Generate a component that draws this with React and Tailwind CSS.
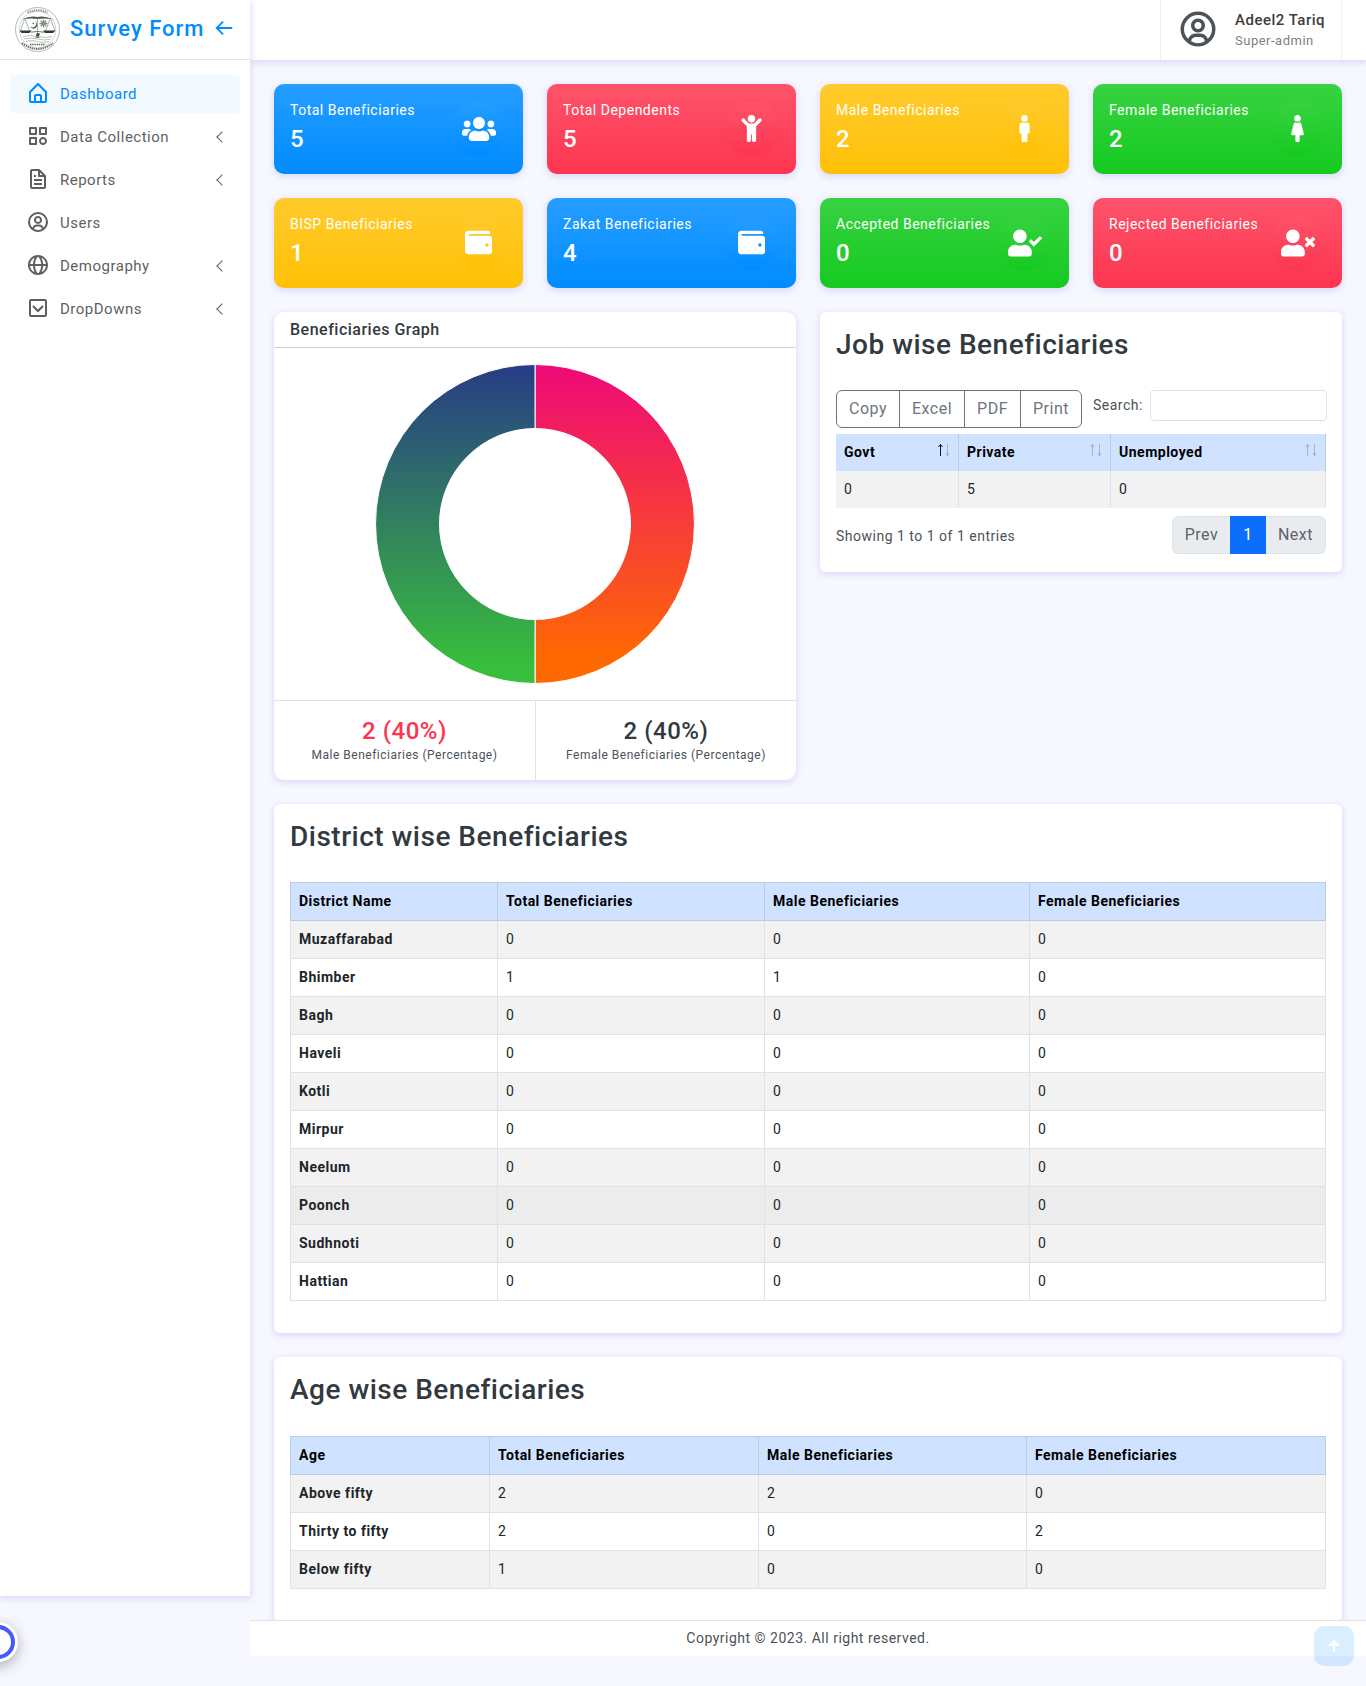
import React from "react";
import {
  BiCategory,
  BiFile,
  BiUserCircle,
  BiGlobe,
  BiChevronDownSquare,
  BiArrowBack,
  BiSolidUpArrowAlt,
} from "react-icons/bi";
import {
  FaUsers,
  FaChild,
  FaMale,
  FaFemale,
  FaWallet,
  FaUserCheck,
  FaUserTimes,
} from "react-icons/fa";

const SHADOW =
  "shadow-[0_2px_6px_0_rgb(218_218_253/0.65),0_2px_6px_0_rgb(206_206_238/0.54)]";

function HomeIcon({ size, className }) {
  return (
    <svg width={size} height={size} viewBox="0 0 24 24" fill="currentColor" className={className}>
      <path d="M5 22h14c1.103 0 2-.897 2-2v-9a1 1 0 0 0-.293-.707l-8-8a1 1 0 0 0-1.414 0l-8 8A1 1 0 0 0 3 11v9c0 1.103.897 2 2 2zm5-2v-5h4v5h-4zm-5-8.586 7-7 7 7V20h-3v-5c0-1.103-.897-2-2-2h-4c-1.103 0-2 .897-2 2v5H5v-8.586z" />
    </svg>
  );
}

function Emblem() {
  return (
    <svg width="45" height="45" viewBox="0 0 45 45" fill="none">
      <circle cx="22.5" cy="22.5" r="22" fill="#fff" stroke="#a4a8a3" strokeWidth="0.8" />
      <circle cx="22.5" cy="22.5" r="18.2" stroke="#a4a8a3" strokeWidth="0.5" />
      <path d="M12.500 5.500q10-4.500 20 0" stroke="#8b918a" strokeWidth="2.2" strokeDasharray="1.3 0.9" />
      <path d="M7 12.200q8-3.600 15.500-2.200 7.500-1.400 15.500 2.200-8-1.400-15.500-.2-7.500-1.200-15.500.2z" fill="#4d5a4b" />
      <path d="M9.500 12 5.500 24M10 12l4.500 12M35 12l-4.500 12M35.500 12 40 24M22.500 10v18" stroke="#8b918a" strokeWidth="0.7" />
      <path d="M4.500 23.500h12l-2 2.600h-8zM28 23.500h12.500l-2.500 2.600h-8z" fill="#26402a" />
      <path d="M16 25.200q6-1.500 13 0" stroke="#4d5a4b" strokeWidth="0.8" />
      <path d="M20.200 14.200a3.900 3.900 0 1 1-5.300 5 3.500 3.500 0 0 0 5.300-5z" fill="#4a594e" />
      <circle cx="18.200" cy="16.500" r="0.8" fill="#4a594e" />
      <path d="M28.500 12.500v8M24.500 16.500h8M25.700 13.700l5.600 5.600M31.300 13.700l-5.600 5.600" stroke="#848c84" strokeWidth="1.300" />
      <path d="M22 26q4 0 2.500 2t.5 3l-5-.5q2-1 1-2.500z" fill="#3c4f3e" />
      <path d="M8 29.500q7-2 14.500 0t14.500 0M9 32q7-2 13.500 0T36 32M11 34.500q6-2 11.500 0t11.500 0" stroke="#adb2ac" strokeWidth="0.8" />
      <path d="M15 37.500h15" stroke="#596158" strokeWidth="1.600" strokeDasharray="1.400 0.8" />
      <path d="M7 36q15.500 12 31 0" stroke="#626a61" strokeWidth="1.900" strokeDasharray="1.400 0.8" />
    </svg>
  );
}

const menu = [
  { label: "Dashboard", Icon: HomeIcon, active: true },
  { label: "Data Collection", Icon: BiCategory, arrow: true },
  { label: "Reports", Icon: BiFile, arrow: true },
  { label: "Users", Icon: BiUserCircle },
  { label: "Demography", Icon: BiGlobe, arrow: true },
  { label: "DropDowns", Icon: BiChevronDownSquare, arrow: true },
];

function Sidebar() {
  return (
    <aside className={"relative z-20 h-[1596px] w-[250px] shrink-0 bg-white " + SHADOW}>
      <div className="flex h-[60px] items-center border-b border-[#e4e4e4] pl-[15px]">
        <Emblem />
        <span className="-mt-[2px] ml-[10px] w-[143px] whitespace-nowrap text-[22px] font-medium leading-[26px] tracking-[1px] text-[#008cff]">
          Survey Form
        </span>
        <BiArrowBack size={22} color="#008cff" className="-mt-1" />
      </div>
      <nav className="flex flex-col gap-[5px] px-[10px] pt-[15px]">
        {menu.map(({ label, Icon, active, arrow }) => (
          <a
            key={label}
            className={
              "flex h-[38px] items-center rounded-[4px] px-4 text-[15px] " +
              (active ? "bg-[#008cff]/5 text-[#008cff]" : "text-[#5f5f5f]")
            }
          >
            <Icon size={24} className="-mt-[3px]" />
            <span className="ml-[10px] flex-1">{label}</span>
            {arrow && (
              <span className="-mr-[2px] block size-2 rotate-45 border-b border-l border-[#5f5f5f]" />
            )}
          </a>
        ))}
      </nav>
    </aside>
  );
}

function Topbar() {
  return (
    <header className={"relative z-10 flex h-[60px] justify-end bg-white pr-6 " + SHADOW}>
      <div className="flex w-[182px] items-center border-x border-[#f0f0f0] pl-4">
        <BiUserCircle size={42} color="#4c5258" className="-mt-[3px]" />
        <div className="ml-4 -mt-[1px]">
          <p className="text-[15px] font-medium leading-[22px] text-[#413c3c]">Adeel2 Tariq</p>
          <p className="text-[13px] leading-[19px] text-[#808080]">Super-admin</p>
        </div>
      </div>
    </header>
  );
}

const tones = {
  blue: "bg-[#008cff]",
  red: "bg-[#fd3550]",
  yellow: "bg-[#ffc107]",
  green: "bg-[#15ca20]",
};

const stats = [
  ["Total Beneficiaries", 5, "blue", FaUsers, 34],
  ["Total Dependents", 5, "red", FaChild, 27],
  ["Male Beneficiaries", 2, "yellow", FaMale, 27],
  ["Female Beneficiaries", 2, "green", FaFemale, 27],
  ["BISP Beneficiaries", 1, "yellow", FaWallet, 27],
  ["Zakat Beneficiaries", 4, "blue", FaWallet, 27],
  ["Accepted Beneficiaries", 0, "green", FaUserCheck, 34],
  ["Rejected Beneficiaries", 0, "red", FaUserTimes, 34],
];

function StatCard({ label, value, tone, Icon, size }) {
  const fill = tones[tone] + " bg-linear-to-b/srgb from-white/15 to-white/0 ";
  return (
    <div
      className={
        fill + "flex h-[90px] items-center justify-between rounded-[10px] px-4 text-white " + SHADOW
      }
    >
      <div>
        <p className="whitespace-nowrap text-[14px] leading-[21px]">{label}</p>
        <p className="my-1 text-[24px] font-medium leading-[29px]">{value}</p>
      </div>
      <div
        className={
          fill + "-ml-6 flex size-14 shrink-0 items-center justify-center rounded-full pr-px pb-px"
        }
      >
        <Icon size={size} className="shrink-0" />
      </div>
    </div>
  );
}

function Donut() {
  return (
    <svg width="320" height="320" viewBox="0 0 320 320" className="mx-auto block">
      <defs>
        <linearGradient id="warm" gradientUnits="userSpaceOnUse" x1="0" y1="0" x2="0" y2="300">
          <stop offset="0" stopColor="#ee0979" />
          <stop offset="1" stopColor="#ff6a00" />
        </linearGradient>
        <linearGradient id="cool" gradientUnits="userSpaceOnUse" x1="0" y1="0" x2="0" y2="300">
          <stop offset="0" stopColor="#283c86" />
          <stop offset="1" stopColor="#39bd3c" />
        </linearGradient>
      </defs>
      <path
        d="M160 .5a159.500 159.500 0 0 1 0 319v-64a95.500 95.500 0 0 0 0-191z"
        fill="url(#warm)"
        stroke="#fff"
      />
      <path
        d="M160 .5a159.500 159.500 0 0 0 0 319v-64a95.500 95.500 0 0 1 0-191z"
        fill="url(#cool)"
        stroke="#fff"
      />
    </svg>
  );
}

function GraphCard() {
  return (
    <section className={"h-[468px] rounded-[10px] bg-white " + SHADOW}>
      <h6 className="h-9 border-b border-[#d0d0d0] px-4 pt-2 text-[16px] font-medium leading-[19px] text-[#32393f]">
        Beneficiaries Graph
      </h6>
      <div className="py-4">
        <Donut />
      </div>
      <div className="grid h-20 grid-cols-2 border-t border-[#dee2e6] text-center">
        <div className="pt-4">
          <p className="text-[24px] font-medium leading-[29px] text-[#fd3550]">2 (40%)</p>
          <p className="text-[12px] leading-[18px]">Male Beneficiaries (Percentage)</p>
        </div>
        <div className="border-l border-[#dee2e6] pt-4">
          <p className="text-[24px] font-medium leading-[29px] text-[#32393f]">2 (40%)</p>
          <p className="text-[12px] leading-[18px]">Female Beneficiaries (Percentage)</p>
        </div>
      </div>
    </section>
  );
}

function SortMark({ asc }) {
  return (
    <svg width="14" height="14" viewBox="0 0 14 14" fill="none" stroke="#000" className="mt-px -mr-px">
      <path d="M3.500 13V1.500M1.500 4 3.500 1.500 5.500 4" opacity={asc ? 0.9 : 0.2} />
      <path d="M10.500 1v11.500M8.500 10l2 2.500 2-2.500" opacity="0.2" />
    </svg>
  );
}

function JobCard() {
  return (
    <section className={"h-[260px] rounded-[6px] bg-white p-4 " + SHADOW}>
      <h3 className="h-[62px] text-[28px] font-medium leading-[34px] text-[#32393f]">
        Job wise Beneficiaries
      </h3>
      <div className="-mr-px flex items-start">
        <div className="flex h-[38px] w-[246px] divide-x divide-[#6c757d] rounded-[6px] border border-[#6c757d] text-[16px] leading-[36px] text-[#6c757d]">
          <span className="w-[63px] text-center">Copy</span>
          <span className="w-[65px] text-center">Excel</span>
          <span className="w-[56px] text-center">PDF</span>
          <span className="flex-1 text-center">Print</span>
        </div>
        <label className="ml-[11px] pt-[5px] leading-[21px]">Search:</label>
        <input className="ml-auto h-[31px] w-[177px] rounded-[4px] border border-[#dee2e6] bg-white" />
      </div>
      <table className="mt-[6px] w-[490px] table-fixed border-separate border-spacing-0 text-left leading-[21px]">
        <colgroup>
          <col className="w-[123px]" />
          <col className="w-[152px]" />
          <col />
        </colgroup>
        <thead>
          <tr className="bg-[#cfe2ff] text-black">
            {["Govt", "Private", "Unemployed"].map((h, i) => (
              <th key={h} className="border-r border-[#bacbe6] py-2 pl-2 pr-2 font-bold">
                <div className="flex justify-between">
                  {h}
                  <SortMark asc={i === 0} />
                </div>
              </th>
            ))}
          </tr>
        </thead>
        <tbody>
          <tr className="bg-[#f2f2f2] text-[#212529]">
            {[0, 5, 0].map((v, i) => (
              <td key={i} className="border-r border-[#dee2e6] p-2">
                {v}
              </td>
            ))}
          </tr>
        </tbody>
      </table>
      <div className="mt-2 flex h-[38px] items-center justify-between">
        <span className="pt-[2px]">Showing 1 to 1 of 1 entries</span>
        <div className="flex h-[38px] w-[154px] overflow-hidden rounded-[6px] text-center text-[16px] leading-[36px]">
          <span className="w-[58px] rounded-l-[6px] border border-r-0 border-[#dee2e6] bg-[#e9ecef] text-[#5c636a]">
            Prev
          </span>
          <span className="w-9 border border-[#0d6efd] bg-[#0d6efd] text-white">1</span>
          <span className="flex-1 rounded-r-[6px] border border-l-0 border-[#dee2e6] bg-[#e9ecef] text-[#5c636a]">
            Next
          </span>
        </div>
      </div>
    </section>
  );
}

function DataTable({ head, rows, cols, hovered }) {
  return (
    <table className="w-[1035px] table-fixed border-collapse text-left leading-[21px]">
      <colgroup>
        {cols.map((c, i) => (
          <col key={i} className={c} />
        ))}
      </colgroup>
      <thead>
        <tr className="bg-[#cfe2ff] text-black">
          {head.map((h) => (
            <th key={h} className="border border-[#bacbe6] p-2 font-bold">
              {h}
            </th>
          ))}
        </tr>
      </thead>
      <tbody>
        {rows.map(([name, ...vals], i) => (
          <tr
            key={name}
            className={
              "text-[#212529] " +
              (name === hovered ? "bg-[#ececec]" : i % 2 === 0 ? "bg-[#f2f2f2]" : "bg-white")
            }
          >
            <th className="border border-[#dee2e6] p-2 font-bold">{name}</th>
            {vals.map((v, j) => (
              <td key={j} className="border border-[#dee2e6] p-2">
                {v}
              </td>
            ))}
          </tr>
        ))}
      </tbody>
    </table>
  );
}

const districts = [
  ["Muzaffarabad", 0, 0, 0],
  ["Bhimber", 1, 1, 0],
  ["Bagh", 0, 0, 0],
  ["Haveli", 0, 0, 0],
  ["Kotli", 0, 0, 0],
  ["Mirpur", 0, 0, 0],
  ["Neelum", 0, 0, 0],
  ["Poonch", 0, 0, 0],
  ["Sudhnoti", 0, 0, 0],
  ["Hattian", 0, 0, 0],
];

const ages = [
  ["Above fifty", 2, 2, 0],
  ["Thirty to fifty", 2, 0, 2],
  ["Below fifty", 1, 0, 0],
];

const totals = ["Total Beneficiaries", "Male Beneficiaries", "Female Beneficiaries"];

export default function App() {
  return (
    <div className="relative flex h-[1686px] w-[1366px] overflow-hidden bg-[#f7f7ff] font-['Roboto',sans-serif] text-[14px] tracking-[0.5px] text-[#4c5258]">
      <Sidebar />
      <div className="w-[1116px]">
        <Topbar />
        <main className="flex flex-col gap-6 px-6 pt-6">
          <div className="grid grid-cols-4 gap-6">
            {stats.map(([label, value, tone, Icon, size]) => (
              <StatCard key={label} label={label} value={value} tone={tone} Icon={Icon} size={size} />
            ))}
          </div>
          <div className="grid grid-cols-2 items-start gap-6">
            <GraphCard />
            <JobCard />
          </div>
          <section className={"h-[529px] rounded-[6px] bg-white p-4 " + SHADOW}>
            <h3 className="h-[62px] text-[28px] font-medium leading-[34px] text-[#32393f]">
              District wise Beneficiaries
            </h3>
            <DataTable
              head={["District Name", ...totals]}
              rows={districts}
              cols={["w-[207px]", "w-[267px]", "w-[265px]", "w-[296px]"]}
              hovered="Poonch"
            />
          </section>
          <section className={"h-[264px] rounded-[6px] bg-white p-4 " + SHADOW}>
            <h3 className="h-[63px] text-[28px] font-medium leading-[34px] text-[#32393f]">
              Age wise Beneficiaries
            </h3>
            <DataTable
              head={["Age", ...totals]}
              rows={ages}
              cols={["w-[199px]", "w-[269px]", "w-[268px]", "w-[299px]"]}
            />
          </section>
        </main>
        <footer className="relative -mt-px h-9 border-t border-[#e4e4e4] bg-white text-center leading-[35px]">
          Copyright © 2023. All right reserved.
        </footer>
      </div>
      <div className="absolute -left-[22px] top-[1622px] z-30 flex size-10 items-center justify-center rounded-full bg-white shadow-[0_4px_14px_rgb(0_0_0/0.3)]">
        <div className="size-[34px] rounded-full border-4 border-[#4759fb]" />
      </div>
      <div className="absolute left-[1314px] top-[1626px] flex size-10 items-center justify-center rounded-[10px] bg-[#008cff]/15 text-white">
        <BiSolidUpArrowAlt size={24} />
      </div>
    </div>
  );
}
